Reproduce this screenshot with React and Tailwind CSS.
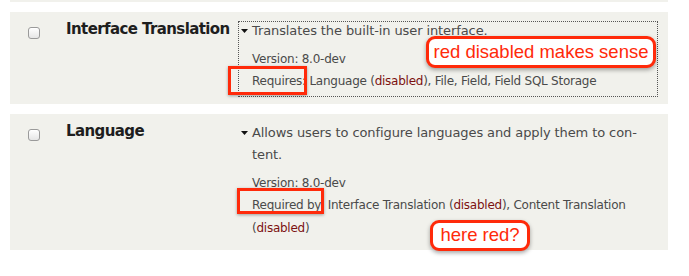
const MODULES = [
  {
    name: "Interface Translation",
    desc: ["Translates the built-in user interface."],
    version: "8.0-dev",
    label: "Requires:",
    deps: [
      [
        { t: "Language (" },
        { t: "disabled", red: true },
        { t: "), File, Field, Field SQL Storage" },
      ],
    ],
    boxed: true,
  },
  {
    name: "Language",
    desc: ["Allows users to configure languages and apply them to con-", "tent."],
    version: "8.0-dev",
    label: "Required by:",
    deps: [
      [
        { t: "Interface Translation (" },
        { t: "disabled", red: true },
        { t: "), Content Translation" },
      ],
      [{ t: "(" }, { t: "disabled", red: true }, { t: ")" }],
    ],
    boxed: false,
  },
]

function Checkbox() {
  return (
    <span className="block w-[12px] h-[12px] rounded-[3px] border border-[#9a9a9a] bg-gradient-to-b from-white to-[#e6e6e6] shadow-[inset_0_1px_0_white]" />
  )
}

function ModuleRow({ m, className }) {
  return (
    <div className={`flex bg-[#f1f1ec] ${className}`}>
      <div className="w-[56px] pl-[18px] pt-[15px] shrink-0">
        <Checkbox />
      </div>
      <div className="w-[172px] shrink-0 pt-[7px] text-[15px] leading-[20px] font-bold text-[#1e1e1e] font-['DejaVu_Sans',sans-serif] tracking-[-0.6px]">
        {m.name}
      </div>
      <div className="flex-1 pt-[9px] pr-[10px]">
        <div
          className={`pl-[1px] pb-[4px] leading-[22px] text-[#4a4a4a] font-['DejaVu_Sans',sans-serif] border border-dotted ${
            m.boxed ? "border-[#555]" : "border-transparent"
          }`}
        >
          <div className="flex -mt-[2px] mb-[6px] text-[13px] tracking-[-0.1px]">
            <span className="w-[12px] shrink-0 flex pt-[9px] pl-[1px]">
              <svg width="7" height="4" viewBox="0 0 7 4">
                <path d="M0 0 L7 0 L3.5 4 Z" fill="#111" />
              </svg>
            </span>
            <div>
              {m.desc.map((d) => (
                <div key={d}>{d}</div>
              ))}
            </div>
          </div>
          <div className="pl-[12px] text-[12px] tracking-[-0.25px] whitespace-nowrap">
            <div>Version: {m.version}</div>
            {m.deps.map((line, i) => (
              <div key={i} className={i > 0 ? "mt-[1px]" : ""}>
                {i === 0 && <span>{m.label} </span>}
                {line.map((p, j) => (
                  <span key={j} className={p.red ? "text-[#7c1111]" : ""}>
                    {p.t}
                  </span>
                ))}
              </div>
            ))}
          </div>
        </div>
      </div>
    </div>
  )
}

function Callout({ text, className }) {
  return (
    <div
      className={`absolute flex items-center justify-center bg-white border-[3px] border-[#ff2a0a] rounded-[9px] shadow-[0_2px_4px_rgba(0,0,0,0.35)] text-[#ff2a0a] text-[18.5px] leading-none font-['Liberation_Sans',Arial,sans-serif] ${className}`}
    >
      {text}
    </div>
  )
}

export default function App() {
  return (
    <div className="relative w-[689px] h-[276px] bg-white overflow-hidden">
      <div className="px-[10px] w-[678px]">
        <div className="h-[2px] bg-[#f1f1ec]" />
        <ModuleRow m={MODULES[0]} className="mt-[10px] h-[92px]" />
        <ModuleRow m={MODULES[1]} className="mt-[10px] h-[136px]" />
      </div>

      {/* annotations */}
      <div className="absolute left-[228px] top-[66px] w-[79px] h-[29px] border-[3px] border-[#ff2a0a] shadow-[0_1px_3px_rgba(0,0,0,0.35)]" />
      <div className="absolute left-[237px] top-[188px] w-[87px] h-[26px] border-[3px] border-[#ff2a0a] shadow-[0_1px_3px_rgba(0,0,0,0.35)]" />
      <Callout text="red disabled makes sense" className="left-[426px] top-[36px] w-[230px] h-[32px]" />
      <Callout text="here red?" className="left-[430px] top-[220px] w-[100px] h-[31px]" />
    </div>
  )
}
